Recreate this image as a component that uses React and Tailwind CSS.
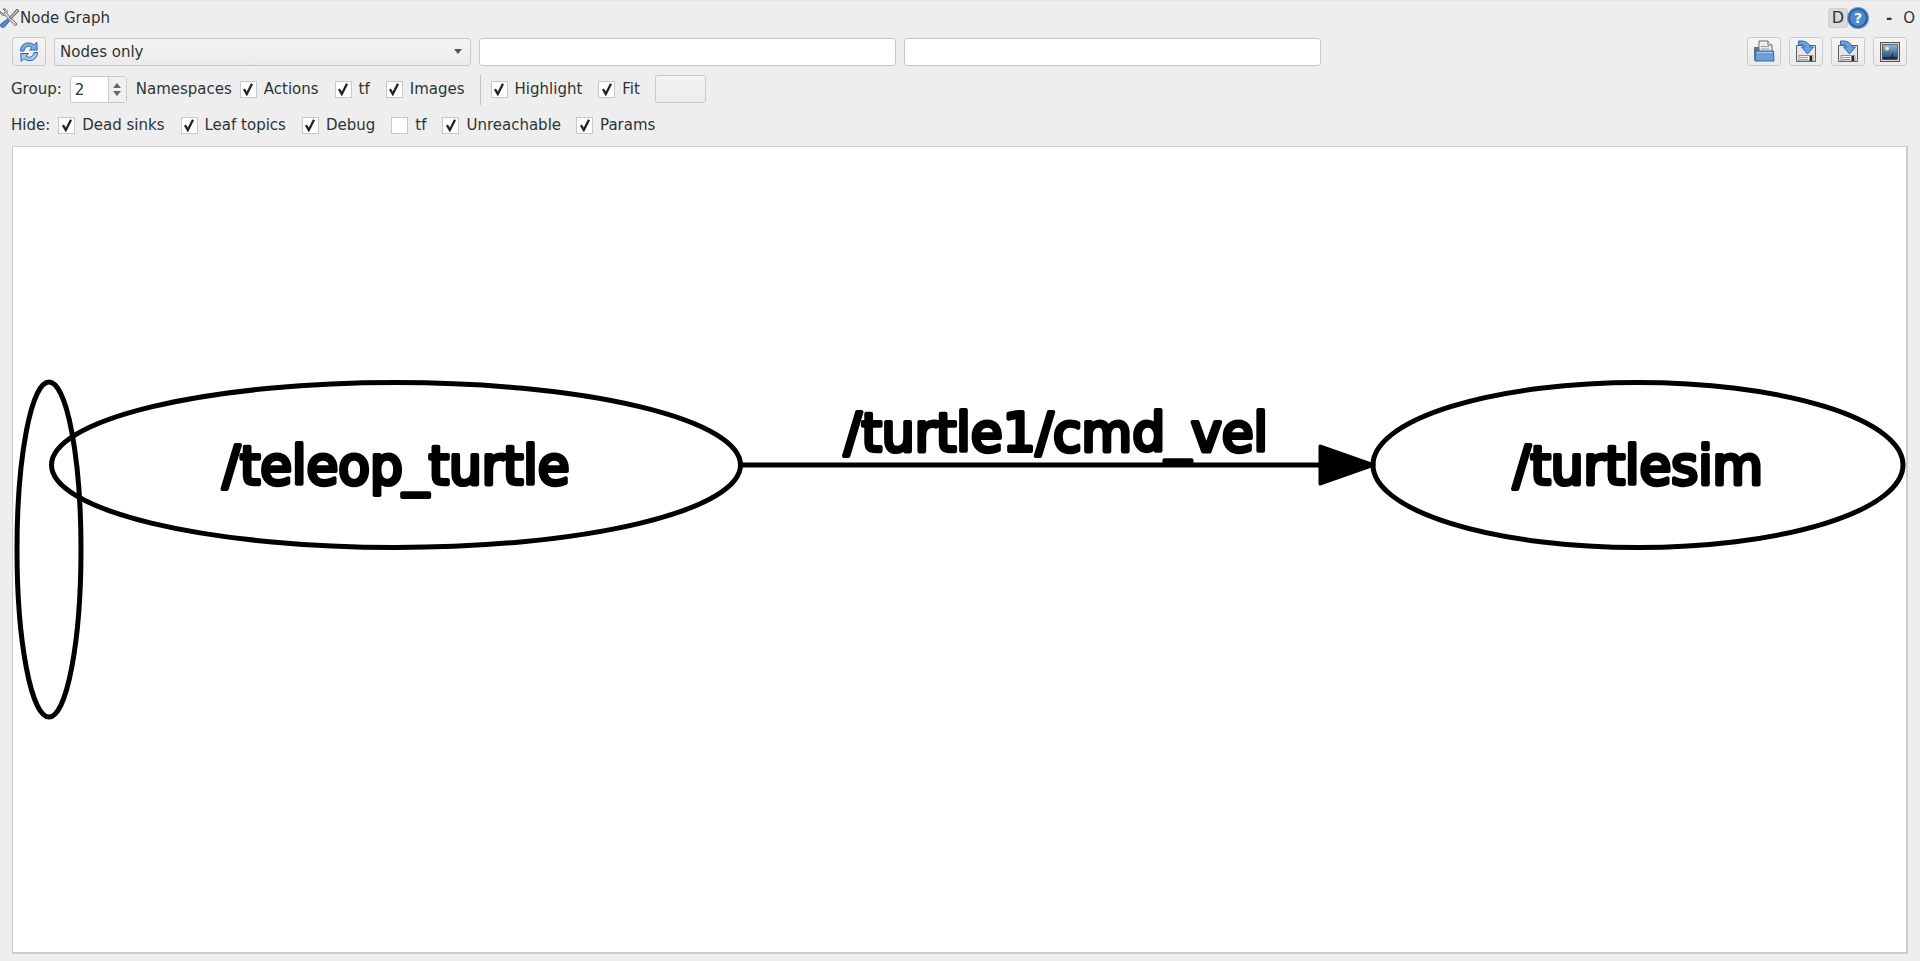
const font = { fontFamily: '"DejaVu Sans", sans-serif' };

function Check({ on = true }) {
  return (
    <span className="flex h-[17px] w-[17px] shrink-0 items-center justify-center border border-[#c9c9c9] bg-white">
      {on && (
        <svg width="14" height="14" viewBox="0 0 14 14">
          <path d="M3 7.2 L5.8 12 L11 1.8" fill="none" stroke="#222" strokeWidth="2.3" />
        </svg>
      )}
    </span>
  );
}

function Opt({ label, on, gap = "mr-[16px]" }) {
  return (
    <span className={`flex items-center gap-[7px] ${gap}`}>
      <Check on={on} />
      <span className="pt-px">{label}</span>
    </span>
  );
}

function ToolBtn({ children }) {
  return (
    <button className="flex h-[29px] w-[34px] items-center justify-center rounded-[3px] border border-[#cbcbcb] bg-gradient-to-b from-[#f5f5f5] to-[#ebebeb]">
      {children}
    </button>
  );
}

function Refresh() {
  return (
    <svg width="20" height="23" viewBox="0 0 20 23">
      <path d="M1.5 11 C1.5 5.5 5.5 2.5 10 3 C12 3 13.5 3.6 15 4.8 L17.8 2 L18.2 10 L10.5 10 L13 7.6 C10 5.2 6 6.2 5 11 Z" fill="#7fa9dc" stroke="#2f68ad" strokeWidth="1" />
      <path d="M18.5 12.5 C18.5 18 14.5 21 10 20.5 C8 20.5 6.5 19.9 5 18.7 L2.2 21.5 L1.8 13.5 L9.5 13.5 L7 15.9 C10 18.3 14 17.3 15 12.5 Z" fill="#a3c4ea" stroke="#2f68ad" strokeWidth="1" />
    </svg>
  );
}

function OpenIcon() {
  return (
    <svg width="24" height="23" viewBox="0 0 24 23">
      <path d="M7 1 H16 L20 5 V13 H7 Z" fill="#eeeeee" stroke="#6d6d6d" strokeWidth="1" />
      <path d="M16 1 V5 H20" fill="#fafafa" stroke="#6d6d6d" strokeWidth="1" />
      <path d="M2 7 H7 V20 H2 Z" fill="#69737e" />
      <path d="M9 6.5 H17 M9 9 H17" stroke="#9a9a9a" strokeWidth="1" />
      <path d="M3.5 11 H21.5 L22 21 H3 Z" fill="#6b9fdb" stroke="#2f68ad" strokeWidth="1" />
      <path d="M4.5 12.5 H20.5" stroke="#a9c8ec" strokeWidth="1" />
    </svg>
  );
}

function SaveIcon() {
  return (
    <svg width="22" height="23" viewBox="0 0 22 23">
      <path d="M1.5 5.5 H20.5 V21.5 H1.5 Z" fill="#e6e6e6" stroke="#5f5f5f" strokeWidth="1" />
      <path d="M4 15.5 H18 V21 H4 Z" fill="#f6f6f6" stroke="#777" strokeWidth="0.8" />
      <path d="M5 17.5 H13 M5 19.5 H13" stroke="#999" strokeWidth="1" />
      <rect x="14.5" y="16" width="2.5" height="5" fill="#222" />
      <path d="M3.5 1 C9 0.5 14 2 15 7 H18.5 L12.5 14 L6.5 7 H9.8 C9 5 7 4.5 3.5 5.5 Z" fill="#6b9fdb" stroke="#2f68ad" strokeWidth="1" />
    </svg>
  );
}

function ImageIcon() {
  return (
    <svg width="22" height="22" viewBox="0 0 22 22">
      <rect x="1.5" y="1.5" width="19" height="19" fill="#d5d5d5" stroke="#555" strokeWidth="1" />
      <defs>
        <linearGradient id="sky" x1="0" y1="0" x2="0" y2="1">
          <stop offset="0" stopColor="#8db8e6" />
          <stop offset="1" stopColor="#1f3d6b" />
        </linearGradient>
      </defs>
      <rect x="3.5" y="3.5" width="15" height="15" fill="url(#sky)" stroke="#333" strokeWidth="0.6" />
      <circle cx="8" cy="7.5" r="2" fill="#f4ec9a" />
      <path d="M14 11 V15.5 H10 L18 16 V18 H4 V16 H12 Z" fill="#222b3a" />
    </svg>
  );
}

function Tools() {
  return (
    <svg width="20" height="20" viewBox="0 0 20 20" className="shrink-0">
      <path d="M0.5 3.5 L3 6 L5 5 L5 3 L3 1 C6 0 8 3 7 5.5 L17 16 L15.5 18 L5 7.5 C2.5 8 0 6 0.5 3.5 Z" fill="#d0d2d4" stroke="#666" strokeWidth="0.9" />
      <path d="M17 1 L19 3 L11 11 L9.5 9.5 Z" fill="#b4b7ba" stroke="#555" strokeWidth="0.9" />
      <path d="M7.5 11 L9.5 13 L5 18.5 C3.5 20 1 19.5 0.5 18 C0 16.5 1 15.5 2 15 Z" fill="#4e86c6" stroke="#2b5f9e" strokeWidth="0.8" />
    </svg>
  );
}

function HelpIcon() {
  return (
    <span className="flex h-[20px] w-[20px] items-center justify-center rounded-full border-2 border-[#2a5f9f] bg-[#4f86c9] text-[14px] font-bold leading-none text-white ring-1 ring-[#6d9bd3]">
      ?
    </span>
  );
}

function GraphLabel({ x, y, len, children }) {
  return (
    <text
      x={x}
      y={y}
      textAnchor="middle"
      fontFamily='"DejaVu Sans", sans-serif'
      fontSize="53"
      textLength={len}
      lengthAdjust="spacingAndGlyphs"
      fill="#000"
      stroke="#000"
      strokeWidth="4.2"
      strokeLinejoin="round"
    >
      {children}
    </text>
  );
}

function Graph() {
  return (
    <svg className="block h-full w-full" viewBox="0 0 1893 805" preserveAspectRatio="none">
      <g fill="none" stroke="#000" strokeWidth="5">
        <ellipse cx="36" cy="402.5" rx="32" ry="167.5" />
        <ellipse cx="383" cy="318" rx="344.5" ry="82.5" />
        <ellipse cx="1625" cy="318" rx="265" ry="82.5" />
        <path d="M728 318 H1310" />
      </g>
      <path d="M1307 299 L1361 318 L1307 337 Z" fill="#000" stroke="#000" strokeWidth="3" strokeLinejoin="round" />
      <GraphLabel x="383" y="337" len="347">/teleop_turtle</GraphLabel>
      <GraphLabel x="1625" y="337" len="250">/turtlesim</GraphLabel>
      <GraphLabel x="1043" y="304" len="424">/turtle1/cmd_vel</GraphLabel>
    </svg>
  );
}

export default function App() {
  return (
    <div className="flex h-[961px] w-[1920px] flex-col overflow-hidden border-t border-[#e4e4e4] bg-[#eeeeee] text-[15px] text-[#2e3436]" style={font}>
      {/* Title bar */}
      <div className="flex h-[36px] shrink-0 items-center pb-[2px]">
        <Tools />
        <span>Node Graph</span>
        <span className="ml-auto flex items-center">
          <span className="flex h-[20px] w-[20px] items-center justify-center rounded-[3px] border border-[#cfcfcf] bg-[#dadada] text-[16px]">D</span>
          <HelpIcon />
          <span className="ml-[18px] font-bold">-</span>
          <span className="ml-[11px] mr-[5px] text-[15px]">O</span>
        </span>
      </div>

      {/* Row 1 */}
      <div className="flex h-[29px] shrink-0 items-center px-[12px]">
        <ToolBtn><Refresh /></ToolBtn>
        <div className="ml-[8px] flex h-[28px] w-[417px] items-center justify-between rounded-[3px] border border-[#c9c9c9] bg-gradient-to-b from-[#f5f5f5] to-[#ebebeb] pl-[5px] pr-[8px]">
          <span className="pt-px">Nodes only</span>
          <span className="h-0 w-0 border-x-[4.5px] border-t-[5px] border-x-transparent border-t-[#555]" />
        </div>
        <div className="ml-[8px] h-[28px] w-[417px] rounded-[3px] border border-[#c9c9c9] bg-white" />
        <div className="ml-[8px] h-[28px] w-[417px] rounded-[3px] border border-[#c9c9c9] bg-white" />
        <div className="ml-auto mr-[1px] flex gap-[8px]">
          <ToolBtn><OpenIcon /></ToolBtn>
          <ToolBtn><SaveIcon /></ToolBtn>
          <ToolBtn><SaveIcon /></ToolBtn>
          <ToolBtn><ImageIcon /></ToolBtn>
        </div>
      </div>

      {/* Row 2 */}
      <div className="mt-[9px] flex h-[28px] shrink-0 items-center pl-[11px]">
        <span className="pt-px">Group:</span>
        <div className="ml-[8px] flex h-[27px] w-[57px] rounded-[3px] border border-[#c9c9c9] bg-white">
          <span className="flex-1 pl-[4px] pt-px leading-[25px]">2</span>
          <span className="flex w-[18px] flex-col items-center justify-center gap-[3px] border-l border-[#c9c9c9] bg-[#f0f0f0]">
            <span className="h-0 w-0 border-x-[4px] border-b-[5px] border-x-transparent border-b-[#666]" />
            <span className="h-0 w-0 border-x-[4px] border-t-[5px] border-x-transparent border-t-[#666]" />
          </span>
        </div>
        <span className="ml-[9px] mr-[8px] pt-px">Namespaces</span>
        <Opt label="Actions" />
        <Opt label="tf" />
        <Opt label="Images" gap="mr-[15px]" />
        <span className="mr-[10px] h-[30px] w-px self-start bg-[#c4c4c4]" />
        <Opt label="Highlight" />
        <Opt label="Fit" gap="mr-[15px]" />
        <button className="h-[28px] w-[51px] rounded-[3px] border border-[#c9c9c9] bg-gradient-to-b from-[#f3f3f3] to-[#ebebeb]" />
      </div>

      {/* Row 3 */}
      <div className="mt-[10px] flex h-[24px] shrink-0 items-center pl-[11px]">
        <span className="mr-[8px] pt-px">Hide:</span>
        <Opt label="Dead sinks" />
        <Opt label="Leaf topics" />
        <Opt label="Debug" />
        <Opt label="tf" on={false} />
        <Opt label="Unreachable" gap="mr-[15px]" />
        <Opt label="Params" />
      </div>

      {/* Canvas */}
      <div className="mx-[12px] mb-[7px] mt-[9px] min-h-0 flex-1 border border-r-2 border-b-2 border-[#cccccc] bg-white">
        <Graph />
      </div>
    </div>
  );
}
